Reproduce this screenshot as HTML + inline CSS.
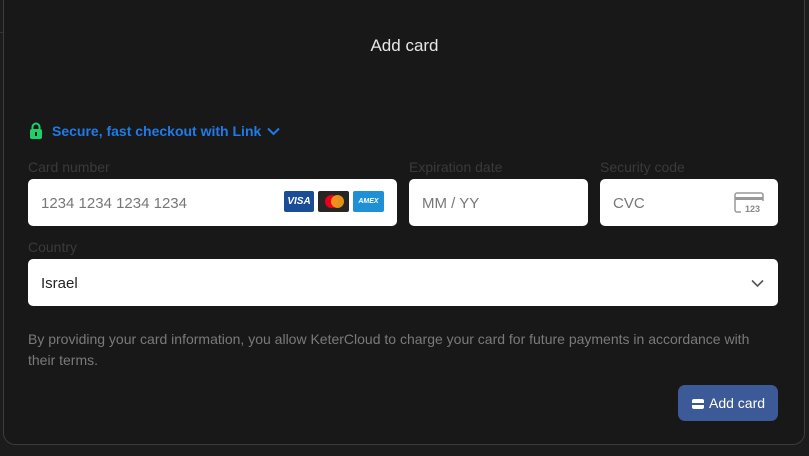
<!DOCTYPE html>
<html><head><meta charset="utf-8"><style>
*{box-sizing:border-box;margin:0;padding:0}
body{width:809px;height:456px;background:#1c1c1c;font-family:"Liberation Sans",sans-serif;position:relative;overflow:hidden}
.modal{position:absolute;left:3px;top:-12px;width:802px;height:457px;background:#181818;border:1px solid #3c3c3c;border-radius:12px}
.abs{position:absolute}
.title{left:0;width:809px;top:36px;text-align:center;color:#e6e6e6;font-size:17px}
.link{left:52px;top:123px;color:#1f7be8;font-size:14px;font-weight:bold}
.lbl{color:#3a3a3a;font-size:14px}
.inp{background:#fff;border-radius:5px;height:47px}
.ph{color:#777;font-size:15px;position:absolute;top:16px}
.terms{left:28px;top:329px;width:745px;color:#7a7a7a;font-size:14px;line-height:21px}
.btn{left:678px;top:385px;width:100px;height:36px;background:#3d5a98;border-radius:7px;color:#fff;font-size:14px}
</style></head><body>
<div class="abs" style="left:0;top:32px;width:3px;height:1px;background:#333"></div>
<div class="modal"></div>
<div class="abs title">Add card</div>
<svg class="abs" style="left:29px;top:122px" width="14" height="17" viewBox="0 0 14 17"><path d="M3.5 7V5a3.5 3.5 0 0 1 7 0v2" stroke="#1ecf6a" stroke-width="2" fill="none"/><rect x="1" y="7" width="12" height="10" rx="2" fill="#1ecf6a"/><rect x="6" y="10" width="2" height="4" fill="#181818"/></svg>
<div class="abs link">Secure, fast checkout with Link</div>
<svg class="abs" style="left:267px;top:127px" width="13" height="9" viewBox="0 0 13 9"><path d="M1 1.5l5.5 5.5 5.5-5.5" stroke="#1f7be8" stroke-width="2" fill="none"/></svg>
<div class="abs lbl" style="left:28px;top:159px">Card number</div>
<div class="abs lbl" style="left:409px;top:159px">Expiration date</div>
<div class="abs lbl" style="left:600px;top:159px">Security code</div>
<div class="abs inp" style="left:28px;top:179px;width:369px"><span class="ph" style="left:13px">1234 1234 1234 1234</span>
<div class="abs" style="left:256px;top:12px;width:30px;height:21px;background:#1a4d96;border-radius:2px;color:#fff;font-size:10px;font-weight:bold;font-style:italic;text-align:center;line-height:21px">VISA</div>
<div class="abs" style="left:290px;top:12px;width:31px;height:21px;background:#262626;border-radius:2px"><div class="abs" style="left:7px;top:4px;width:13px;height:13px;border-radius:50%;background:#eb001b"></div><div class="abs" style="left:13px;top:4px;width:13px;height:13px;border-radius:50%;background:#f79e1b;opacity:.9"></div></div>
<div class="abs" style="left:325px;top:12px;width:31px;height:21px;background:#1f8fd6;border-radius:2px;color:#fff;font-size:7px;font-weight:bold;font-style:italic;text-align:center;line-height:21px">AMEX</div>
</div>
<div class="abs inp" style="left:409px;top:179px;width:179px"><span class="ph" style="left:13px">MM / YY</span></div>
<div class="abs inp" style="left:600px;top:179px;width:178px"><span class="ph" style="left:13px">CVC</span>
<svg class="abs" style="left:133px;top:12px" width="32" height="23" viewBox="0 0 32 23"><path d="M8 21H4a2 2 0 0 1-2-2V4a2 2 0 0 1 2-2h24a2 2 0 0 1 2 2v6" stroke="#999" stroke-width="1.5" fill="none"/><rect x="2" y="6" width="28" height="3" fill="#999"/><text x="12" y="21" font-size="9" font-weight="bold" fill="#888" font-family="Liberation Sans">123</text></svg></div>
<div class="abs lbl" style="left:28px;top:239px">Country</div>
<div class="abs inp" style="left:28px;top:259px;width:750px"><span class="ph" style="left:13px;color:#222">Israel</span>
<svg class="abs" style="left:723px;top:20px" width="13" height="9" viewBox="0 0 13 9"><path d="M1 1.5l5.5 5.5 5.5-5.5" stroke="#555" stroke-width="1.6" fill="none"/></svg></div>
<div class="abs terms">By providing your card information, you allow KeterCloud to charge your card for future payments in accordance with their terms.</div>
<div class="abs btn"><svg class="abs" style="left:14px;top:14px" width="12" height="10" viewBox="0 0 12 10"><rect x="0" y="0" width="12" height="10" rx="2" fill="#fff"/><rect x="0" y="4" width="12" height="2" fill="#3d5a98"/></svg><span class="abs" style="left:31px;top:10px">Add card</span></div>
</body></html>
